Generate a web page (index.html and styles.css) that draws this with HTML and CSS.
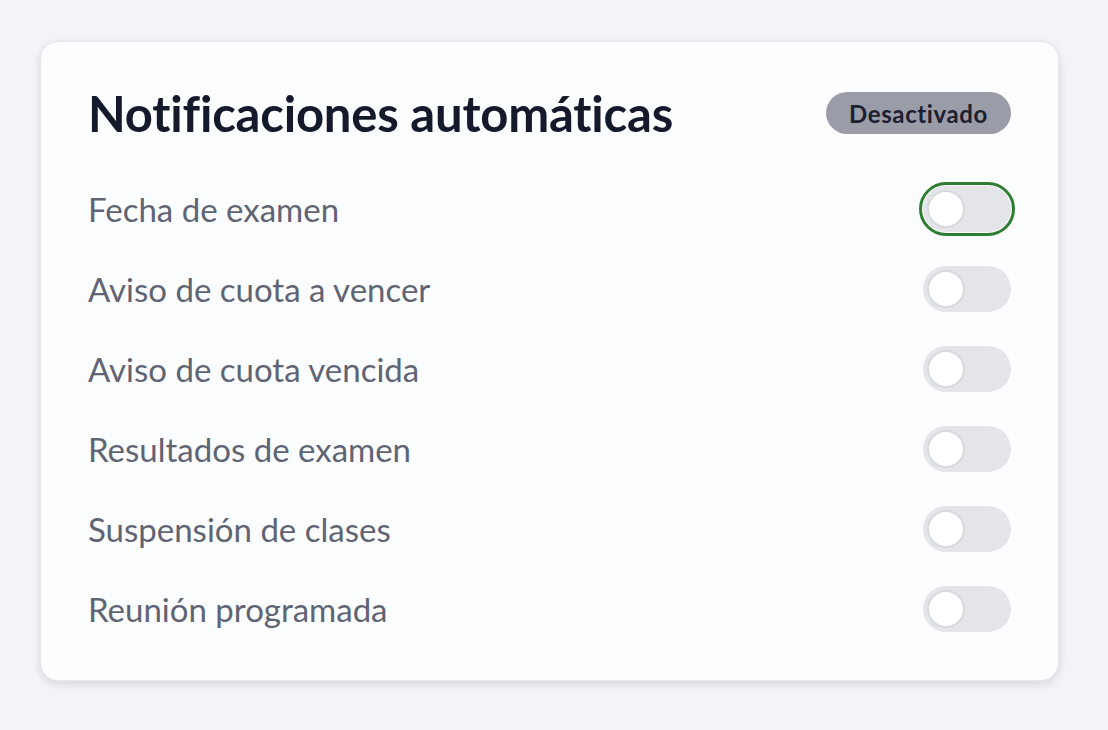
FILE: index.html
```html
<!DOCTYPE html>
<html lang="es">
<head>
<meta charset="utf-8">
<title>Notificaciones automáticas</title>
<link rel="stylesheet" href="styles.css">
</head>
<body>
<div class="page">
  <section class="card">
    <header class="card-header">
      <h1 class="title">Notificaciones automáticas</h1>
      <span class="badge">Desactivado</span>
    </header>
    <ul class="list">
      <li class="row"><span class="label">Fecha de examen</span><span class="toggle toggle--focus"><span class="knob"></span></span></li>
      <li class="row"><span class="label">Aviso de cuota a vencer</span><span class="toggle"><span class="knob"></span></span></li>
      <li class="row"><span class="label">Aviso de cuota vencida</span><span class="toggle"><span class="knob"></span></span></li>
      <li class="row"><span class="label">Resultados de examen</span><span class="toggle"><span class="knob"></span></span></li>
      <li class="row"><span class="label">Suspensión de clases</span><span class="toggle"><span class="knob"></span></span></li>
      <li class="row"><span class="label">Reunión programada</span><span class="toggle"><span class="knob"></span></span></li>
    </ul>
  </section>
</div>
</body>
</html>
```
FILE: styles.css
```css
* { box-sizing: border-box; }
html, body { margin: 0; padding: 0; }
body {
  background: #f3f4f7;
  font-family: "Lato", "Open Sans", sans-serif;
  width: 1108px;
  height: 730px;
  overflow: hidden;
}
.page {
  padding: 41px 49px 0 40px;
}
.card {
  width: 1019px;
  height: 640px;
  background: #fcfdfe;
  border-radius: 18px;
  border: 1px solid #e6e7ec;
  box-shadow: 0 3px 8px rgba(20, 24, 40, 0.13);
  padding: 47px 47px 31px 47px;
  display: flex;
  flex-direction: column;
}
.card-header {
  display: flex;
  align-items: center;
  justify-content: space-between;
  height: 48px;
  margin-bottom: 32px;
}
.title {
  margin: 0;
  font-size: 49px;
  font-weight: 700;
  color: #141a2b;
  letter-spacing: -0.2px;
  line-height: 1;
}
.badge {
  display: inline-flex;
  align-items: center;
  justify-content: center;
  width: 185px;
  height: 42px;
  border-radius: 21px;
  background: #9a9ca8;
  color: #1c2030;
  font-size: 24px;
  font-weight: 700;
  letter-spacing: 0.6px;
}
.list {
  list-style: none;
  margin: 0;
  padding: 0;
}
.row {
  height: 80px;
  display: flex;
  align-items: center;
  justify-content: space-between;
}
.label {
  font-size: 33px;
  color: #5f6474;
}
.toggle {
  width: 88px;
  height: 46px;
  border-radius: 23px;
  background: #e4e5e9;
  display: flex;
  align-items: center;
  padding-left: 4px;
}
.toggle--focus {
  outline: 3px solid #2e7d32;
  outline-offset: 1px;
}
.knob {
  width: 38px;
  height: 38px;
  border-radius: 50%;
  background: #ffffff;
  border: 2px solid #d8d9de;
}
```
